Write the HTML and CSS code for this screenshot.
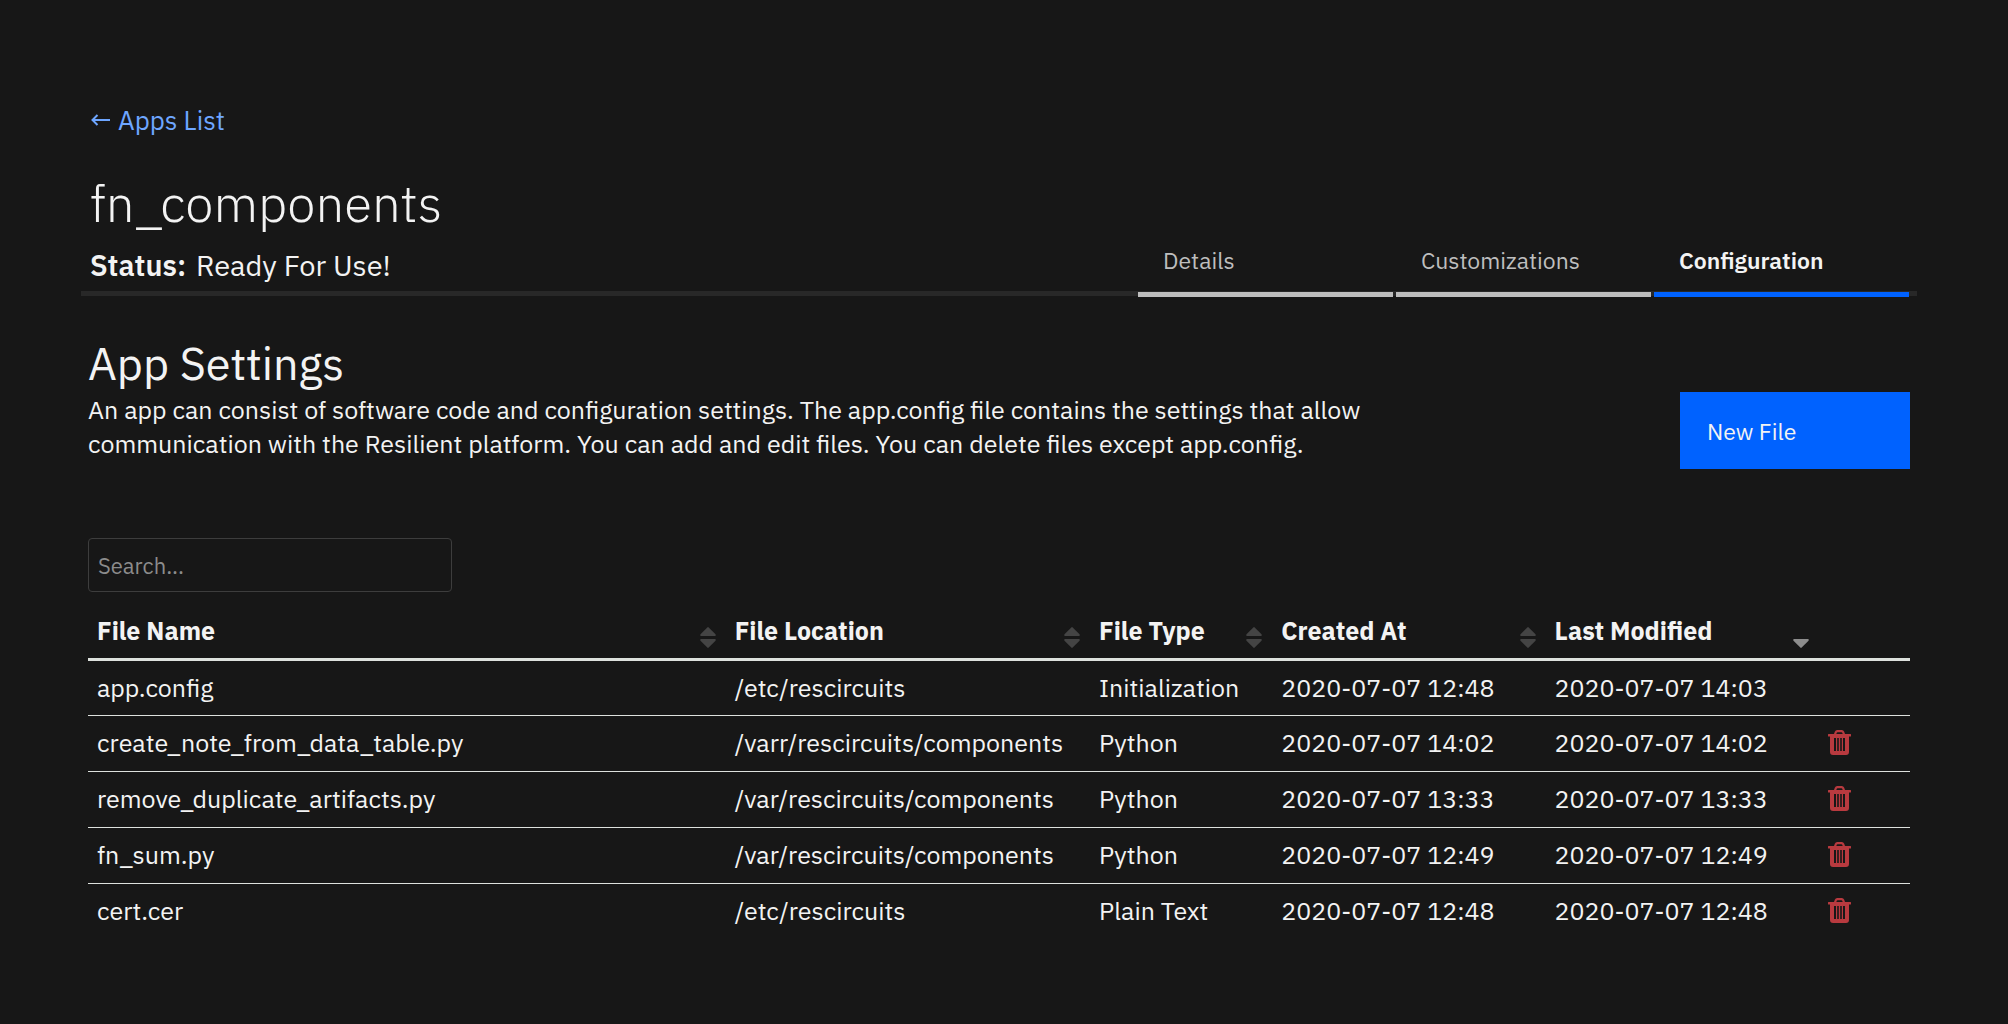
FILE: index.html
```html
<!DOCTYPE html>
<html lang="en">
<head>
<meta charset="utf-8">
<meta name="viewport" content="width=device-width, initial-scale=1">
<title>fn_components</title>
<link rel="stylesheet" href="styles.css">
</head>
<body>
<svg class="sprite" aria-hidden="true">
  <symbol id="trash" viewBox="0 0 23 25">
    <path fill-rule="evenodd" d="M.5 4H6l.8-2.200Q7.500 0 9.200 0h4.600q1.700 0 2.400 1.800L17 4h5.500q.5 0 .5.500V6q0 .5-.5.500H21V22q0 3-3 3H5q-3 0-3-3V6.500H.5Q0 6.500 0 6V4.500Q0 4 .5 4zM8.300 4h6.400l-.5-1.300q-.2-.5-.7-.5h-4q-.5 0-.7.500zM6 8v13h2V8zM9.200 8v13h1.600V8zM12.200 8v13h1.600V8zM15 8v13h2V8z"/>
  </symbol>
  <symbol id="sort-up" viewBox="0 0 16 9"><path d="M7.300.4q.7-.7 1.400 0l6.800 6.900Q16.200 9 15 9H1Q-.2 9 .5 7.300z"/></symbol>
  <symbol id="sort-down" viewBox="0 0 16 9"><path d="M7.300 8.600q.7.700 1.400 0l6.800-6.900Q16.200 0 15 0H1Q-.2 0 .5 1.700z"/></symbol>
</svg>
<main class="page">
  <header class="app-header">
    <a class="back-link" href="#apps"><svg class="arrow" viewBox="0 0 20 12" aria-hidden="true"><path d="M19 6H2M6.500 1 1.500 6l5 5"/></svg>Apps List</a>
    <h1 class="app-name">fn_components</h1>
    <div class="header-row">
      <p class="status"><strong>Status:</strong> Ready For Use!</p>
      <nav class="tabs">
        <a class="tab" href="#details">Details</a>
        <a class="tab" href="#customizations">Customizations</a>
        <a class="tab active" href="#configuration" aria-current="page">Configuration</a>
      </nav>
    </div>
  </header>

  <section class="content">
    <div class="intro">
      <div class="intro-text">
        <h2>App Settings</h2>
        <p>An app can consist of software code and configuration settings. The app.config file contains the settings that allow communication with the Resilient platform. You can add and edit files. You can delete files except app.config.</p>
      </div>
      <button class="new-file" type="button">New File</button>
    </div>

    <input class="search" type="search" placeholder="Search..." aria-label="Search files">

    <table class="files">
      <colgroup><col class="w35"><col class="w20"><col class="w10"><col class="w15"><col class="w15"><col class="w5"></colgroup>
      <thead>
        <tr>
          <th scope="col"><div class="head">File Name<span class="sort"><svg><use href="#sort-up"/></svg><svg><use href="#sort-down"/></svg></span></div></th>
          <th scope="col"><div class="head">File Location<span class="sort"><svg><use href="#sort-up"/></svg><svg><use href="#sort-down"/></svg></span></div></th>
          <th scope="col"><div class="head">File Type<span class="sort"><svg><use href="#sort-up"/></svg><svg><use href="#sort-down"/></svg></span></div></th>
          <th scope="col"><div class="head">Created At<span class="sort"><svg><use href="#sort-up"/></svg><svg><use href="#sort-down"/></svg></span></div></th>
          <th scope="col" aria-sort="descending"><div class="head">Last Modified<span class="sort sorted"><svg><use href="#sort-down"/></svg></span></div></th>
          <td></td>
        </tr>
      </thead>
      <tbody>
        <tr><td>app.config</td><td>/etc/rescircuits</td><td>Initialization</td><td>2020-07-07 12:48</td><td>2020-07-07 14:03</td><td></td></tr>
        <tr><td>create_note_from_data_table.py</td><td>/varr/rescircuits/components</td><td>Python</td><td>2020-07-07 14:02</td><td>2020-07-07 14:02</td><td><button class="delete" type="button" aria-label="Delete"><svg><use href="#trash"/></svg></button></td></tr>
        <tr><td>remove_duplicate_artifacts.py</td><td>/var/rescircuits/components</td><td>Python</td><td>2020-07-07 13:33</td><td>2020-07-07 13:33</td><td><button class="delete" type="button" aria-label="Delete"><svg><use href="#trash"/></svg></button></td></tr>
        <tr><td>fn_sum.py</td><td>/var/rescircuits/components</td><td>Python</td><td>2020-07-07 12:49</td><td>2020-07-07 12:49</td><td><button class="delete" type="button" aria-label="Delete"><svg><use href="#trash"/></svg></button></td></tr>
        <tr><td>cert.cer</td><td>/etc/rescircuits</td><td>Plain Text</td><td>2020-07-07 12:48</td><td>2020-07-07 12:48</td><td><button class="delete" type="button" aria-label="Delete"><svg><use href="#trash"/></svg></button></td></tr>
      </tbody>
    </table>
  </section>
</main>
</body>
</html>
```
FILE: styles.css
```css
* { box-sizing: border-box; }

body {
  margin: 0;
  background: #171717;
  color: #f3f3f3;
  font: 400 25px/34px "IBM Plex Sans", Lato, sans-serif;
}

h1, h2, p { margin: 0; }
button, input { font: inherit; color: inherit; }
a { text-decoration: none; }
svg { display: block; fill: currentColor; }
.sprite { position: absolute; width: 0; height: 0; }

.page { padding: 100px 91px 48px 81px; }

/* header */
.back-link {
  display: inline-flex;
  align-items: center;
  gap: 7px;
  margin-left: 10px;
  color: #6ea6ff;
  font-size: 26px;
}
.arrow {
  width: 20px;
  height: 12px;
  fill: none;
  stroke: currentColor;
  stroke-width: 2;
}
.app-name {
  margin: 34px 0 0 9px;
  font-size: 51px;
  font-weight: 300;
  line-height: 64px;
}
.header-row {
  display: flex;
  justify-content: space-between;
  align-items: flex-end;
  height: 61px;
  border-bottom: 5px solid #282828;
}
.status {
  align-self: flex-start;
  padding: 10px 0 0 9px;
  font-size: 29px;
  line-height: 40px;
}
.status strong { margin-right: 3px; font-weight: 600; }
.tabs {
  display: flex;
  gap: 3px;
  margin: 0 8px -6px 0;
}
.tab {
  width: 255px;
  padding: 12px 25px 17px;
  border-bottom: 5px solid #bebebe;
  color: #bebebe;
  font-size: 23px;
  line-height: 30px;
}
.tab.active {
  border-color: #0062ff;
  color: #f3f3f3;
  font-weight: 600;
}

/* settings */
.content { padding: 38px 7px 0; }
.intro {
  display: flex;
  justify-content: space-between;
  align-items: flex-end;
}
.intro-text { flex: 0 1 1310px; }
.intro h2 {
  font-size: 45px;
  font-weight: 400;
  line-height: 59px;
}
.new-file {
  flex: none;
  width: 230px;
  height: 77px;
  margin-bottom: -8px;
  padding: 0 27px;
  border: 0;
  background: #0062ff;
  font-size: 23px;
  text-align: left;
}
.search {
  display: block;
  width: 364px;
  height: 54px;
  margin: 77px 0 12px;
  padding: 0 9px;
  border: 1px solid #3d3d3d;
  border-radius: 4px;
  background: transparent;
  font-size: 22px;
}
.search::placeholder { color: #8c8c8c; opacity: 1; }

/* file table */
.files {
  width: 100%;
  table-layout: fixed;
  border-collapse: collapse;
  text-align: left;
}
.w35 { width: 35%; }
.w20 { width: 20%; }
.w15 { width: 15%; }
.w10 { width: 10%; }
.w5 { width: 5%; }
th, td {
  height: 56px;
  padding: 0 0 0 9px;
  white-space: nowrap;
}
tbody td {
  border-bottom: 1px solid #dde1dd;
}
tbody tr:last-child td { border-bottom: 0; }
thead tr { border-bottom: 3px solid #dde1dd; }
thead th, thead td { height: 55px; }
.head {
  display: flex;
  justify-content: space-between;
  align-items: flex-end;
  padding-right: 10px;
  font-weight: 700;
}
.sort {
  display: grid;
  gap: 3px;
  color: #444;
}
.sort svg { width: 16px; height: 9px; }
.sort.sorted { color: #8d8d8d; }
.delete {
  display: block;
  margin: -2px 0 0;
  padding: 0;
  border: 0;
  background: none;
  color: #b83a3f;
}
.delete svg { width: 23px; height: 25px; }
```
